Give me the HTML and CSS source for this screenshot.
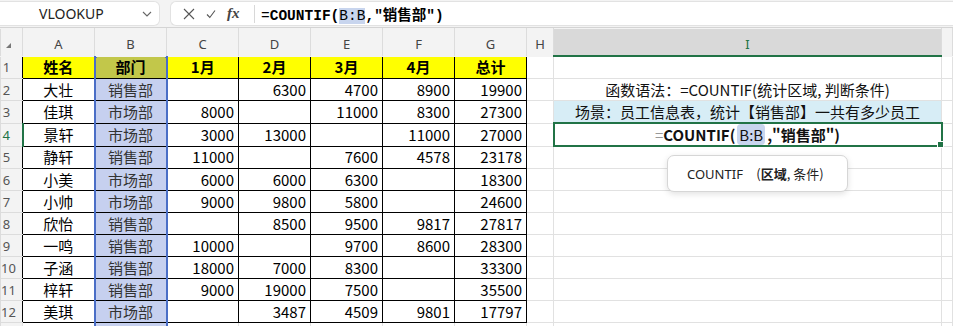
FILE: index.html
```html
<!DOCTYPE html>
<html lang="zh">
<head>
    <meta charset="utf-8">
    <title>COUNTIF 示例</title>
    <link rel="stylesheet" href="styles.css">
</head>
<body>
    <div class="topbar">
        <div class="name-box">
            <span class="name-text">VLOOKUP</span>
            <svg class="chevron" width="10" height="6" viewBox="0 0 10 6"><path d="M1 1 L5 5 L9 1" fill="none" stroke="#666" stroke-width="1.1"/></svg>
        </div>
        <div class="formula-box">
            <svg class="icon" width="12" height="12" viewBox="0 0 12 12"><path d="M1 1 L11 11 M11 1 L1 11" stroke="#555" stroke-width="1.1"/></svg>
            <svg class="icon check" width="10" height="10" viewBox="0 0 10 10"><path d="M1 5.5 L3.8 8.5 L9 1.5" fill="none" stroke="#555" stroke-width="1.1"/></svg>
            <span class="fx">fx</span>
            <span class="divider"></span>
            <span class="formula">=<b>COUNTIF(</b><span class="ref">B:B</span><b>,"销售部")</b></span>
        </div>
    </div>

    <table class="sheet">
        <colgroup>
            <col class="c-rh"><col class="c-std"><col class="c-std"><col class="c-std"><col class="c-std"><col class="c-std"><col class="c-std"><col class="c-std"><col class="c-h"><col class="c-i"><col>
        </colgroup>
        <tr class="col-heads">
            <th class="corner"><span class="tri"></span></th>
            <th>A</th><th>B</th><th>C</th><th>D</th><th>E</th><th>F</th><th>G</th><th>H</th>
            <th class="active-col">I</th><th></th>
        </tr>
        <tr>
            <td class="rh">1</td>
            <td class="t head">姓名</td><td class="t head sel sel-top">部门</td><td class="t head">1月</td><td class="t head">2月</td><td class="t head">3月</td><td class="t head">4月</td><td class="t head">总计</td>
            <td></td><td></td><td></td>
        </tr>
        <tr>
            <td class="rh">2</td>
            <td class="t c">大壮</td><td class="t c sel">销售部</td><td class="t n"></td><td class="t n">6300</td><td class="t n">4700</td><td class="t n">8900</td><td class="t n">19900</td>
            <td></td><td class="note">函数语法：=COUNTIF(统计区域, 判断条件)</td><td></td>
        </tr>
        <tr>
            <td class="rh">3</td>
            <td class="t c">佳琪</td><td class="t c sel">市场部</td><td class="t n">8000</td><td class="t n"></td><td class="t n">11000</td><td class="t n">8300</td><td class="t n">27300</td>
            <td></td><td class="note scene">场景：员工信息表，统计【销售部】一共有多少员工</td><td></td>
        </tr>
        <tr>
            <td class="rh active-row">4</td>
            <td class="t c">景轩</td><td class="t c sel">市场部</td><td class="t n">3000</td><td class="t n">13000</td><td class="t n"></td><td class="t n">11000</td><td class="t n">27000</td>
            <td></td>
            <td class="note active-cell"><span class="eq">=</span><b>COUNTIF(</b><span class="ref-box">B:B</span><b>,"销售部")</b></td>
            <td></td>
        </tr>
        <tr>
            <td class="rh">5</td>
            <td class="t c">静轩</td><td class="t c sel">销售部</td><td class="t n">11000</td><td class="t n"></td><td class="t n">7600</td><td class="t n">4578</td><td class="t n">23178</td>
            <td></td><td></td><td></td>
        </tr>
        <tr>
            <td class="rh">6</td>
            <td class="t c">小美</td><td class="t c sel">市场部</td><td class="t n">6000</td><td class="t n">6000</td><td class="t n">6300</td><td class="t n"></td><td class="t n">18300</td>
            <td></td><td></td><td></td>
        </tr>
        <tr>
            <td class="rh">7</td>
            <td class="t c">小帅</td><td class="t c sel">市场部</td><td class="t n">9000</td><td class="t n">9800</td><td class="t n">5800</td><td class="t n"></td><td class="t n">24600</td>
            <td></td><td></td><td></td>
        </tr>
        <tr>
            <td class="rh">8</td>
            <td class="t c">欣怡</td><td class="t c sel">销售部</td><td class="t n"></td><td class="t n">8500</td><td class="t n">9500</td><td class="t n">9817</td><td class="t n">27817</td>
            <td></td><td></td><td></td>
        </tr>
        <tr>
            <td class="rh">9</td>
            <td class="t c">一鸣</td><td class="t c sel">销售部</td><td class="t n">10000</td><td class="t n"></td><td class="t n">9700</td><td class="t n">8600</td><td class="t n">28300</td>
            <td></td><td></td><td></td>
        </tr>
        <tr>
            <td class="rh">10</td>
            <td class="t c">子涵</td><td class="t c sel">销售部</td><td class="t n">18000</td><td class="t n">7000</td><td class="t n">8300</td><td class="t n"></td><td class="t n">33300</td>
            <td></td><td></td><td></td>
        </tr>
        <tr>
            <td class="rh">11</td>
            <td class="t c">梓轩</td><td class="t c sel">销售部</td><td class="t n">9000</td><td class="t n">19000</td><td class="t n">7500</td><td class="t n"></td><td class="t n">35500</td>
            <td></td><td></td><td></td>
        </tr>
        <tr>
            <td class="rh">12</td>
            <td class="t c">美琪</td><td class="t c sel">市场部</td><td class="t n"></td><td class="t n">3487</td><td class="t n">4509</td><td class="t n">9801</td><td class="t n">17797</td>
            <td></td><td></td><td></td>
        </tr>
        <tr>
            <td class="rh"></td>
            <td></td><td class="sel"></td><td></td><td></td><td></td><td></td><td></td>
            <td></td><td></td><td></td>
        </tr>
    </table>

    <div class="tooltip">COUNTIF <span class="args">(<b>区域</b>, 条件)</span></div>
</body>
</html>
```

FILE: styles.css
```css
body {
    margin: 0;
    width: 953px;
    height: 326px;
    overflow: hidden;
    position: relative;
    background: #fff;
    font-family: "Noto Sans CJK SC", sans-serif;
}

/* formula bar */
.topbar {
    box-sizing: border-box;
    height: 28px;
    padding: 1px 0 1px 0;
    display: flex;
    gap: 10px;
    background: #f3f3f3;
    border-bottom: 1px solid #d4d4d4;
}

.name-box {
    width: 160px;
    box-sizing: border-box;
    display: flex;
    align-items: center;
    background: #fff;
    border: 1px solid #e2e2e2;
    border-left: none;
    border-radius: 0 6px 6px 0;
    padding-left: 39px;
}

.name-text {
    font-family: "Noto Sans", sans-serif;
    font-size: 14px;
    color: #222;
    flex: 1;
}

.chevron {
    margin-right: 7px;
}

.formula-box {
    flex: 1;
    display: flex;
    align-items: center;
    background: #fff;
    border: 1px solid #e2e2e2;
    border-right: none;
    border-radius: 6px 0 0 6px;
    padding-left: 12px;
}

.icon {
    margin-right: 11px;
}

.fx {
    font-family: "Liberation Serif", serif;
    font-style: italic;
    font-weight: bold;
    font-size: 15px;
    color: #444;
    width: 14px;
}

.divider {
    width: 1px;
    height: 18px;
    background: #d8d8d8;
    margin: 0 6px 0 13px;
}

.formula {
    font-family: "Liberation Mono", "Noto Sans CJK SC", monospace;
    font-size: 14.5px;
    color: #000;
    white-space: pre;
}

.formula .ref {
    background: #c8d5ee;
}

/* sheet grid */
.sheet {
    table-layout: fixed;
    width: 953px;
    border-collapse: collapse;
}

.c-rh { width: 22px; }
.c-std { width: 72px; }
.c-h { width: 27px; }
.c-i { width: 388px; }

.sheet td,
.sheet th {
    border: 1px solid #e1e1e1;
    padding: 0 4px;
    height: 21px;
    font-size: 15px;
    line-height: 20px;
    white-space: nowrap;
    overflow: hidden;
}

.sheet .col-heads th {
    height: 22px;
    background: #f3f3f3;
    border-color: #f3f3f3 #dcdcdc #f3f3f3 #dcdcdc;
    font-family: "Noto Sans", sans-serif;
    font-weight: normal;
    font-size: 13px;
    line-height: 18px;
    color: #444;
    padding-top: 4px;
    padding-bottom: 0;
}

.sheet .col-heads .active-col {
    background: #d9d9d9;
    color: #217346;
    border-bottom: 2px solid #217346;
}

.corner {
    position: relative;
}

.tri {
    position: absolute;
    left: 5px;
    top: 14px;
    border-style: solid;
    border-width: 0 0 5px 5px;
    border-color: transparent transparent #777 transparent;
}

.sheet .rh {
    background: #f3f3f3;
    border-color: #dcdcdc;
    border-right: none;
    font-family: "Noto Sans", sans-serif;
    font-size: 13px;
    color: #555;
    text-align: center;
    padding: 0 10px 0 0;
    overflow: visible;
}

.sheet .active-row {
    color: #217346;
    border-right: 2px solid #217346;
}

.sheet .t {
    border: 1px solid #000;
}

.head {
    background: #ffff00;
    font-weight: bold;
    text-align: center;
}

.c {
    text-align: center;
}

.n {
    text-align: right;
}

.sheet .sel {
    background: #c6d0ef;
    color: #333;
    border-left: 2px solid #4a6ec6;
    border-right: 2px solid #4a6ec6;
}

.sheet .head.sel {
    background: #c2c74a;
    color: #000;
}

.sel-top {
    position: relative;
    overflow: visible;
}

.sel-top::before,
.sel-top::after {
    content: "";
    position: absolute;
    top: -2px;
    width: 4px;
    height: 3px;
    background: #4a6ec6;
}

.sel-top::before { left: -3px; }
.sel-top::after { right: -3px; }

.note {
    text-align: center;
    color: #111;
}

.scene {
    background: #d7edf6;
}

.sheet .active-cell {
    border: 2px solid #217346;
    position: relative;
    overflow: visible;
}

.active-cell::after {
    content: "";
    position: absolute;
    right: -3px;
    bottom: -3px;
    width: 5px;
    height: 5px;
    background: #217346;
    border: 1px solid #fff;
}

.eq {
    color: #999;
}

.ref-box {
    background: #c8d5ee;
    border-radius: 4px;
    padding: 0 2px;
    margin: 0 2px;
}

/* function hint */
.tooltip {
    position: absolute;
    left: 667px;
    top: 155px;
    box-sizing: border-box;
    width: 181px;
    height: 37px;
    padding: 8px 0 0 19px;
    background: #fff;
    border: 1px solid #d6d6d6;
    border-radius: 7px;
    box-shadow: 0 2px 6px rgba(0, 0, 0, 0.12);
    font-family: "Noto Sans", "Noto Sans CJK SC", sans-serif;
    font-size: 13px;
    color: #222;
    white-space: pre;
}

.args {
    font-family: "Noto Sans CJK SC", sans-serif;
    margin-left: 10px;
}
```
